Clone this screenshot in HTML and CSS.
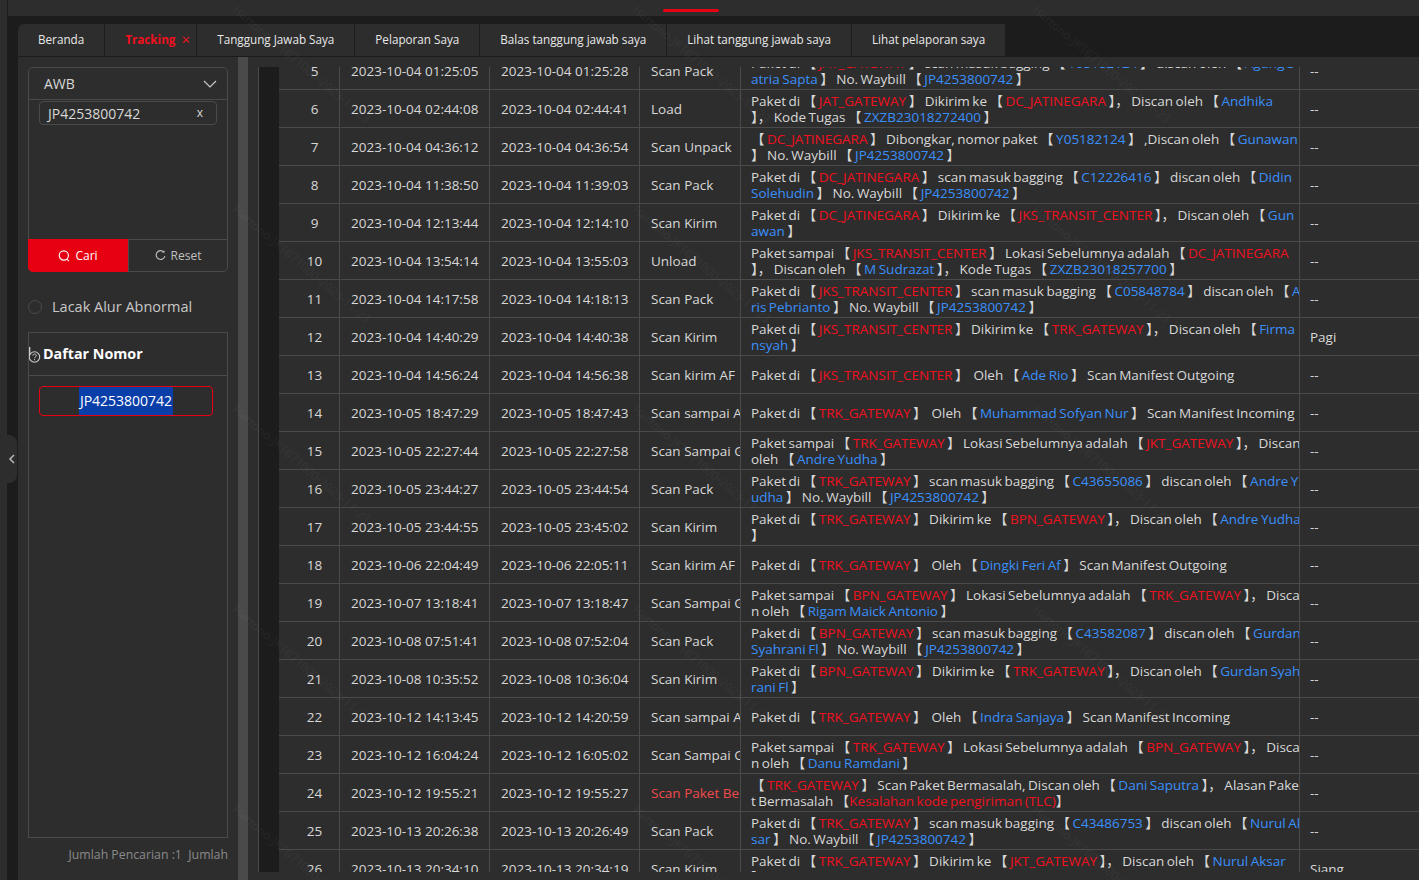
FILE: index.html
```html
<!DOCTYPE html>
<html lang="en">
<head>
  <meta charset="UTF-8" />
  <title>Tracking</title>
  <link rel="stylesheet" href="styles.css">
</head>
<body>
  <div class="app">
    <div class="rail">
      <div class="rail-handle">
        <svg width="8" height="10" viewBox="0 0 8 10"><path d="M6 1 2 5l4 4" fill="none" stroke="#b5b5b5" stroke-width="1.6"/></svg>
      </div>
    </div>
    <div class="main">
      <div class="topbar"><div class="topbar-mark"></div></div>
      <div class="tabs">
        <div class="tab">Beranda</div>
        <div class="tab tab-active"><b>Tracking</b><span class="tab-close">×</span></div>
        <div class="tab">Tanggung Jawab Saya</div>
        <div class="tab">Pelaporan Saya</div>
        <div class="tab">Balas tanggung jawab saya</div>
        <div class="tab">Lihat tanggung jawab saya</div>
        <div class="tab">Lihat pelaporan saya</div>
      </div>
      <div class="content">
        <aside class="side">
          <div class="search-box">
            <div class="search-head">
              <span>AWB</span>
              <svg width="14" height="8" viewBox="0 0 14 8"><path d="M1 1l6 6 6-6" fill="none" stroke="#c8c8c8" stroke-width="1.2"/></svg>
            </div>
            <div class="search-body">
              <div class="chip"><span>JP4253800742</span><span class="chip-x">x</span></div>
            </div>
            <div class="search-btns">
              <div class="btn btn-red">
                <svg width="12" height="12" viewBox="0 0 12 12"><circle cx="5.8" cy="5.5" r="4.6" fill="none" stroke="#fff" stroke-width="1.1"/><path d="M8.8 9l2 2.2" stroke="#fff" stroke-width="1.1"/></svg>
                Cari
              </div>
              <div class="btn">
                <svg width="11" height="11" viewBox="0 0 11 11"><path d="M8.9 2.1A4.4 4.4 0 1 0 9.9 6" fill="none" stroke="#c0c0c0" stroke-width="1.1"/><path d="M6.6 2.6h3V.4z" fill="#c0c0c0"/></svg>
                Reset
              </div>
            </div>
          </div>
          <label class="radio"><span class="radio-dot"></span><span class="radio-text">Lacak Alur Abnormal</span></label>
          <div class="list-box">
            <div class="list-head">
              <svg class="help" width="12" height="17" viewBox="0 0 12 17"><path d="M.7 0v10" stroke="#ddd" stroke-width="1.2"/><circle cx="5.5" cy="10" r="5.2" fill="#2d2d2d" stroke="#ccc" stroke-width="1.1"/><path d="M3.8 8.6c0-2.2 3.5-2.2 3.5 0 0 1.3-1.8 1.3-1.8 2.6M5.5 12.2v1" fill="none" stroke="#ccc" stroke-width="1"/></svg>
              <b>Daftar Nomor</b>
            </div>
            <div class="list-body">
              <div class="awb-item"><span class="awb-sel">JP4253800742</span></div>
            </div>
          </div>
          <div class="side-foot">Jumlah Pencarian :1&nbsp; Jumlah</div>
        </aside>
        <div class="gutter"></div>
        <section class="panel">
          <div class="table-wrap">
            <table class="track">
              <colgroup>
                <col class="c-fix"><col class="c-no"><col class="c-date"><col class="c-date"><col class="c-type"><col class="c-desc"><col>
              </colgroup>
              <tbody>
                <tr><td class="fix"></td><td class="no">5</td><td class="d1">2023-10-04 01:25:05</td><td>2023-10-04 01:25:28</td><td>Scan Pack</td><td class="desc">Paket di 【 <i class="r">JAT_GATEWAY</i> 】 scan masuk bagging 【 <i class="b">Y05182124</i> 】 discan oleh 【 <i class="b">Agung S</i><br><i class="b">atria Sapta</i> 】 No. Waybill 【 <i class="b">JP4253800742</i> 】</td><td>--</td></tr>
                <tr><td class="fix"></td><td class="no">6</td><td class="d1">2023-10-04 02:44:08</td><td>2023-10-04 02:44:41</td><td>Load</td><td class="desc">Paket di 【 <i class="r">JAT_GATEWAY</i> 】 Dikirim ke 【 <i class="r">DC_JATINEGARA</i> 】， Discan oleh 【 <i class="b">Andhika</i><br>】， Kode Tugas 【 <i class="b">ZXZB23018272400</i> 】</td><td>--</td></tr>
                <tr><td class="fix"></td><td class="no">7</td><td class="d1">2023-10-04 04:36:12</td><td>2023-10-04 04:36:54</td><td>Scan Unpack</td><td class="desc">【 <i class="r">DC_JATINEGARA</i> 】 Dibongkar, nomor paket 【 <i class="b">Y05182124</i> 】 ,Discan oleh 【 <i class="b">Gunawan</i><br>】 No. Waybill 【 <i class="b">JP4253800742</i> 】</td><td>--</td></tr>
                <tr><td class="fix"></td><td class="no">8</td><td class="d1">2023-10-04 11:38:50</td><td>2023-10-04 11:39:03</td><td>Scan Pack</td><td class="desc">Paket di 【 <i class="r">DC_JATINEGARA</i> 】 scan masuk bagging 【 <i class="b">C12226416</i> 】 discan oleh 【 <i class="b">Didin</i><br><i class="b">Solehudin</i> 】 No. Waybill 【 <i class="b">JP4253800742</i> 】</td><td>--</td></tr>
                <tr><td class="fix"></td><td class="no">9</td><td class="d1">2023-10-04 12:13:44</td><td>2023-10-04 12:14:10</td><td>Scan Kirim</td><td class="desc">Paket di 【 <i class="r">DC_JATINEGARA</i> 】 Dikirim ke 【 <i class="r">JKS_TRANSIT_CENTER</i> 】， Discan oleh 【 <i class="b">Gun</i><br><i class="b">awan</i> 】</td><td>--</td></tr>
                <tr><td class="fix"></td><td class="no">10</td><td class="d1">2023-10-04 13:54:14</td><td>2023-10-04 13:55:03</td><td>Unload</td><td class="desc">Paket sampai 【 <i class="r">JKS_TRANSIT_CENTER</i> 】 Lokasi Sebelumnya adalah 【 <i class="r">DC_JATINEGARA</i><br>】， Discan oleh 【 <i class="b">M Sudrazat</i> 】， Kode Tugas 【 <i class="b">ZXZB23018257700</i> 】</td><td>--</td></tr>
                <tr><td class="fix"></td><td class="no">11</td><td class="d1">2023-10-04 14:17:58</td><td>2023-10-04 14:18:13</td><td>Scan Pack</td><td class="desc">Paket di 【 <i class="r">JKS_TRANSIT_CENTER</i> 】 scan masuk bagging 【 <i class="b">C05848784</i> 】 discan oleh 【 <i class="b">A</i><br><i class="b">ris Pebrianto</i> 】 No. Waybill 【 <i class="b">JP4253800742</i> 】</td><td>--</td></tr>
                <tr><td class="fix"></td><td class="no">12</td><td class="d1">2023-10-04 14:40:29</td><td>2023-10-04 14:40:38</td><td>Scan Kirim</td><td class="desc">Paket di 【 <i class="r">JKS_TRANSIT_CENTER</i> 】 Dikirim ke 【 <i class="r">TRK_GATEWAY</i> 】， Discan oleh 【 <i class="b">Firma</i><br><i class="b">nsyah</i> 】</td><td>Pagi</td></tr>
                <tr><td class="fix"></td><td class="no">13</td><td class="d1">2023-10-04 14:56:24</td><td>2023-10-04 14:56:38</td><td>Scan kirim AF</td><td class="desc">Paket di 【 <i class="r">JKS_TRANSIT_CENTER</i> 】 &nbsp;Oleh 【 <i class="b">Ade Rio</i> 】 Scan Manifest Outgoing</td><td>--</td></tr>
                <tr><td class="fix"></td><td class="no">14</td><td class="d1">2023-10-05 18:47:29</td><td>2023-10-05 18:47:43</td><td>Scan sampai AF</td><td class="desc">Paket di 【 <i class="r">TRK_GATEWAY</i> 】 &nbsp;Oleh 【 <i class="b">Muhammad Sofyan Nur</i> 】 Scan Manifest Incoming</td><td>--</td></tr>
                <tr><td class="fix"></td><td class="no">15</td><td class="d1">2023-10-05 22:27:44</td><td>2023-10-05 22:27:58</td><td>Scan Sampai Gateway</td><td class="desc">Paket sampai 【 <i class="r">TRK_GATEWAY</i> 】 Lokasi Sebelumnya adalah 【 <i class="r">JKT_GATEWAY</i> 】， Discan<br>oleh 【 <i class="b">Andre Yudha</i> 】</td><td>--</td></tr>
                <tr><td class="fix"></td><td class="no">16</td><td class="d1">2023-10-05 23:44:27</td><td>2023-10-05 23:44:54</td><td>Scan Pack</td><td class="desc">Paket di 【 <i class="r">TRK_GATEWAY</i> 】 scan masuk bagging 【 <i class="b">C43655086</i> 】 discan oleh 【 <i class="b">Andre Y</i><br><i class="b">udha</i> 】 No. Waybill 【 <i class="b">JP4253800742</i> 】</td><td>--</td></tr>
                <tr><td class="fix"></td><td class="no">17</td><td class="d1">2023-10-05 23:44:55</td><td>2023-10-05 23:45:02</td><td>Scan Kirim</td><td class="desc">Paket di 【 <i class="r">TRK_GATEWAY</i> 】 Dikirim ke 【 <i class="r">BPN_GATEWAY</i> 】， Discan oleh 【 <i class="b">Andre Yudha</i><br>】</td><td>--</td></tr>
                <tr><td class="fix"></td><td class="no">18</td><td class="d1">2023-10-06 22:04:49</td><td>2023-10-06 22:05:11</td><td>Scan kirim AF</td><td class="desc">Paket di 【 <i class="r">TRK_GATEWAY</i> 】 &nbsp;Oleh 【 <i class="b">Dingki Feri Af</i> 】 Scan Manifest Outgoing</td><td>--</td></tr>
                <tr><td class="fix"></td><td class="no">19</td><td class="d1">2023-10-07 13:18:41</td><td>2023-10-07 13:18:47</td><td>Scan Sampai Gateway</td><td class="desc">Paket sampai 【 <i class="r">BPN_GATEWAY</i> 】 Lokasi Sebelumnya adalah 【 <i class="r">TRK_GATEWAY</i> 】， Disca<br>n oleh 【 <i class="b">Rigam Maick Antonio</i> 】</td><td>--</td></tr>
                <tr><td class="fix"></td><td class="no">20</td><td class="d1">2023-10-08 07:51:41</td><td>2023-10-08 07:52:04</td><td>Scan Pack</td><td class="desc">Paket di 【 <i class="r">BPN_GATEWAY</i> 】 scan masuk bagging 【 <i class="b">C43582087</i> 】 discan oleh 【 <i class="b">Gurdan</i><br><i class="b">Syahrani Fl</i> 】 No. Waybill 【 <i class="b">JP4253800742</i> 】</td><td>--</td></tr>
                <tr><td class="fix"></td><td class="no">21</td><td class="d1">2023-10-08 10:35:52</td><td>2023-10-08 10:36:04</td><td>Scan Kirim</td><td class="desc">Paket di 【 <i class="r">BPN_GATEWAY</i> 】 Dikirim ke 【 <i class="r">TRK_GATEWAY</i> 】， Discan oleh 【 <i class="b">Gurdan Syah</i><br><i class="b">rani Fl</i> 】</td><td>--</td></tr>
                <tr><td class="fix"></td><td class="no">22</td><td class="d1">2023-10-12 14:13:45</td><td>2023-10-12 14:20:59</td><td>Scan sampai AF</td><td class="desc">Paket di 【 <i class="r">TRK_GATEWAY</i> 】 &nbsp;Oleh 【 <i class="b">Indra Sanjaya</i> 】 Scan Manifest Incoming</td><td>--</td></tr>
                <tr><td class="fix"></td><td class="no">23</td><td class="d1">2023-10-12 16:04:24</td><td>2023-10-12 16:05:02</td><td>Scan Sampai Gateway</td><td class="desc">Paket sampai 【 <i class="r">TRK_GATEWAY</i> 】 Lokasi Sebelumnya adalah 【 <i class="r">BPN_GATEWAY</i> 】， Disca<br>n oleh 【 <i class="b">Danu Ramdani</i> 】</td><td>--</td></tr>
                <tr><td class="fix"></td><td class="no">24</td><td class="d1">2023-10-12 19:55:21</td><td>2023-10-12 19:55:27</td><td class="type-bad">Scan Paket Bermasalah</td><td class="desc">【 <i class="r">TRK_GATEWAY</i> 】 Scan Paket Bermasalah, Discan oleh 【 <i class="b">Dani Saputra</i> 】， Alasan Pake<br>t Bermasalah 【<i class="r">Kesalahan kode pengiriman (TLC)</i>】</td><td>--</td></tr>
                <tr><td class="fix"></td><td class="no">25</td><td class="d1">2023-10-13 20:26:38</td><td>2023-10-13 20:26:49</td><td>Scan Pack</td><td class="desc">Paket di 【 <i class="r">TRK_GATEWAY</i> 】 scan masuk bagging 【 <i class="b">C43486753</i> 】 discan oleh 【 <i class="b">Nurul Ak</i><br><i class="b">sar</i> 】 No. Waybill 【 <i class="b">JP4253800742</i> 】</td><td>--</td></tr>
                <tr><td class="fix"></td><td class="no">26</td><td class="d1">2023-10-13 20:34:10</td><td>2023-10-13 20:34:19</td><td>Scan Kirim</td><td class="desc">Paket di 【 <i class="r">TRK_GATEWAY</i> 】 Dikirim ke 【 <i class="r">JKT_GATEWAY</i> 】， Discan oleh 【 <i class="b">Nurul Aksar</i><br>】</td><td>Siang</td></tr>
              </tbody>
            </table>
          </div>
        </section>
      </div>
    </div>
    <svg class="watermark" width="1419" height="880">
      <defs>
        <pattern id="wm" width="400" height="200" patternUnits="userSpaceOnUse">
          <text transform="translate(237 5) rotate(40)" x="0" y="8">Hartono-JKT671000-2023-11-23</text>
        </pattern>
      </defs>
      <rect width="1419" height="880" fill="url(#wm)"/>
    </svg>
  </div>
</body>
</html>
```

FILE: styles.css
```css
* { box-sizing: border-box; margin: 0; padding: 0; }
html, body { height: 100%; overflow: hidden; }
body {
  font-family: "Open Sans", "Noto Sans CJK SC", sans-serif;
  font-size: 14px;
  background: #1c1c1c;
  color: #d8d8d8;
}

.app { display: flex; height: 880px; position: relative; overflow: hidden; }

/* LEFT RAIL */
.rail { width: 7px; background: #2d2d2d; flex: none; position: relative; }
.rail-handle {
  position: absolute;
  top: 435px;
  left: 7px;
  width: 10px;
  height: 48px;
  background: #2d2d2d;
  border-radius: 0 8px 8px 0;
  display: flex;
  align-items: center;
  justify-content: center;
}

.main { flex: 1; min-width: 0; display: flex; flex-direction: column; }

/* TOP BAR */
.topbar { height: 16px; margin-left: 1px; background: #2d2d2d; position: relative; flex: none; }
.topbar-mark {
  position: absolute;
  left: 655px;
  top: 9px;
  width: 56px;
  height: 3px;
  border-radius: 2px;
  background: #e60012;
}

/* TABS */
.tabs { display: flex; margin: 8px 0 1px 11px; height: 32px; flex: none; }
.tab {
  display: flex;
  align-items: center;
  padding: 0 20px 2px;
  margin-right: 1px;
  background: #2d2d2d;
  color: #e8e8e8;
  font-size: 11.7px;
  white-space: nowrap;
}
.tab:first-child { border-radius: 6px 0 0 0; }
.tab:last-child { margin-right: 0; }
.tab-active { color: #f0101e; padding-right: 0; width: 91px; }
.tab-active b { font-size: 11.7px; }
.tab-close { margin-left: 6px; font-size: 15px; line-height: 1; }

.content { flex: 1; display: flex; min-height: 0; margin-left: 11px; }

/* SIDE PANEL */
.side { width: 220px; flex: none; background: #2d2d2d; padding: 10px; overflow: hidden; }

.search-box {
  height: 205px;
  border: 1px solid #4a4a4a;
  border-radius: 5px;
  display: flex;
  flex-direction: column;
}
.search-head {
  height: 32px;
  flex: none;
  padding: 0 10px 0 15px;
  border-bottom: 1px solid #4a4a4a;
  display: flex;
  align-items: center;
  justify-content: space-between;
}
.search-body { flex: 1; padding: 1px 10px 0; }
.chip {
  height: 24px;
  padding: 0 13px 0 8px;
  border: 1px solid #4a4a4a;
  border-radius: 4px;
  display: flex;
  align-items: center;
  justify-content: space-between;
}
.chip-x { font-size: 12px; margin-top: -2px; }

.search-btns { height: 32px; flex: none; display: flex; border-top: 1px solid #4a4a4a; }
.btn {
  flex: 1;
  display: flex;
  align-items: center;
  justify-content: center;
  gap: 5px;
  font-size: 12px;
  color: #c0c0c0;
  border-left: 1px solid #4a4a4a;
}
.btn-red { background: #e60012; color: #fff; border-left: 0; border-radius: 0 0 0 5px; margin: -1px 0 -1px -1px; flex: none; width: 100px; }

.radio { display: flex; align-items: center; gap: 10px; margin-top: 28px; height: 14px; color: #c8c8c8; font-size: 14.5px; }
.radio-dot { width: 14px; height: 14px; border: 1px solid #4a4a4a; border-radius: 50%; }
.radio-text { margin-top: -2px; }

.list-box { height: 506px; margin-top: 18px; border: 1px solid #4a4a4a; }
.list-head {
  height: 43px;
  padding: 0 0 2px 14px;
  border-bottom: 1px solid #4a4a4a;
  display: flex;
  align-items: center;
  color: #fff;
  position: relative;
  font-size: 14.3px;
}
.help { position: absolute; left: 0; top: 14px; }
.list-body { padding: 10px; }
.awb-item {
  width: 174px;
  height: 30px;
  border: 1px solid #e60012;
  border-radius: 4px;
  display: flex;
  justify-content: center;
  color: #fff;
}
.awb-sel { background: #0a3ea8; line-height: 28px; padding: 0 1px; }
.side-foot { margin-top: 8px; text-align: right; font-size: 12.3px; color: #8a8a8a; white-space: nowrap; }

.gutter { width: 10px; flex: none; background: #4a4a4a; }

/* TRACK TABLE */
.panel { flex: 1; min-width: 0; background: #2d2d2d; padding: 10px 0 8px 10px; }
.table-wrap { height: 100%; overflow: hidden; border-left: 1px solid #4a4a4a; }
.track { width: 1160px; margin-top: -15px; table-layout: fixed; border-collapse: separate; border-spacing: 0; }
.c-fix { width: 20px; }
.c-no { width: 61px; }
.c-date { width: 150px; }
.c-type { width: 101px; }
.c-desc { width: 559px; }
.track td {
  height: 38px;
  padding: 0 10px;
  line-height: 16px;
  font-size: 13.5px;
  white-space: nowrap;
  overflow: hidden;
  border-right: 1px solid #4a4a4a;
  border-bottom: 1px solid #4a4a4a;
}
.track td:last-child { border-right: 0; }
.track td:nth-child(4), .track td:nth-child(5) { padding-left: 11px; }
.track td.fix { padding: 0; background: #1c1c1c; border: 0; }
.track td.no { text-align: center; padding: 0 0 0 11px; }
.track td.d1 { border-left: 1px solid #2d2d2d; }
.track td.type-bad { color: #f04a4a; }
.track td.desc { word-spacing: -1px; }
.desc i { font-style: normal; }
.r { color: #f0101e; }
.b { color: #3a90fb; }

.watermark { position: absolute; left: 0; top: 0; pointer-events: none; }
.watermark text { font-size: 12px; fill: rgba(255, 255, 255, 0.035); font-family: "Open Sans", sans-serif; }
```
